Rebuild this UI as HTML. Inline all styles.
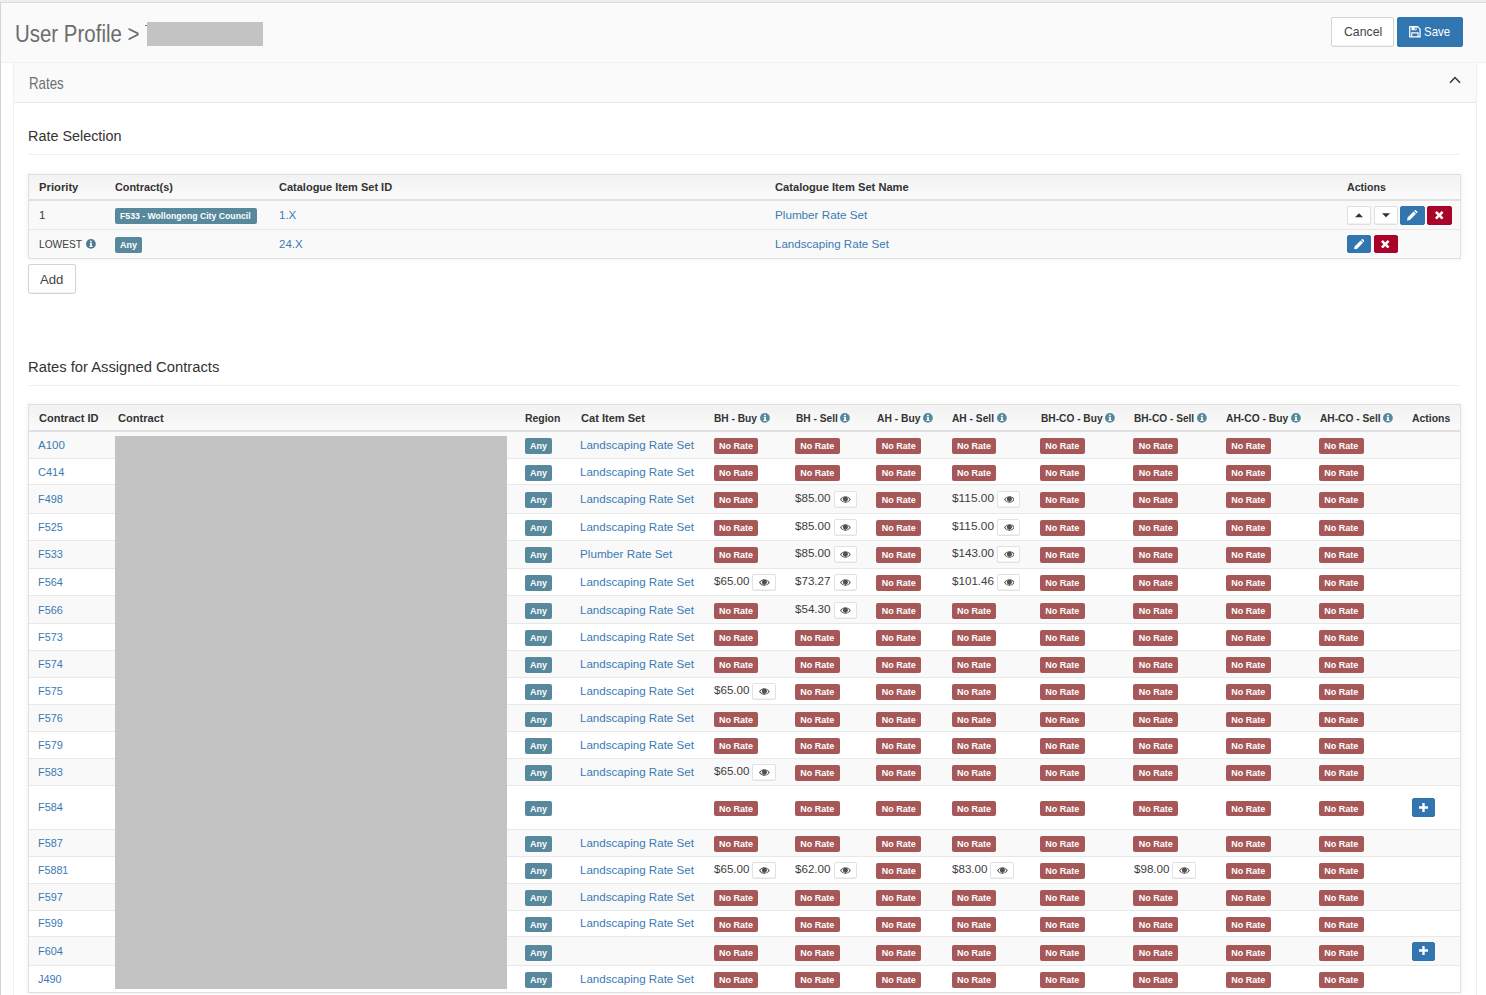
<!DOCTYPE html>
<html lang="en"><head><meta charset="utf-8"><title>User Profile</title>
<style>
*{box-sizing:border-box}
html,body{margin:0;padding:0}
body{width:1486px;height:995px;overflow:hidden;position:relative;background:#fff;font-family:"Liberation Sans",Arial,sans-serif;font-size:11.5px;color:#3d3d3d;line-height:16px}
a{color:#3b7ab4;text-decoration:none}
.sx{display:inline-block;white-space:nowrap;vertical-align:top}
.sx>span{display:inline-block;transform-origin:0 50%;white-space:nowrap}
#topstrip{position:absolute;left:0;top:0;width:1486px;height:3px;background:#eee;border-bottom:1px solid #dcdcdc}
#leftedge{position:absolute;left:0;top:3px;width:1px;height:992px;background:#d9d2d2}
#header{position:absolute;left:1px;top:3px;width:1485px;height:60px;background:#fafafa;border-bottom:1px solid #f0f0f0}
#title{position:absolute;left:14.5px;top:19.6px;font-size:23.3px;line-height:28px;color:#6c6c6c;white-space:nowrap}
#redact1{position:absolute;left:147.1px;top:22px;width:115.9px;height:23.5px;background:#c3c3c3}
#tick{position:absolute;left:145.3px;top:24.6px;width:1.8px;height:1.8px;background:#777}
.btn{position:absolute;display:block;border-radius:2px;font-size:13px;line-height:16px;white-space:nowrap}
.btn .sx{position:absolute}
#cancel{left:1331px;top:17px;width:63px;height:30px;background:#fff;border:1px solid #d4d4d4;color:#444;box-shadow:inset 0 -1px 0 rgba(0,0,0,.05)}
#save{left:1397px;top:17px;width:66px;height:30px;background:#3276b1;border:1px solid #3073ad;color:#fff}
#floppy{position:absolute;left:11px;top:8.4px}
#add{left:28px;top:264.4px;width:47.5px;height:30px;background:#fff;border:1px solid #d4d4d4;color:#444;box-shadow:inset 0 -1px 0 rgba(0,0,0,.05)}
#panel{position:absolute;left:13px;top:63px;width:1464px;height:940px;border:1px solid #f0efee;border-top:none;background:#fff}
#phead{position:absolute;left:0;top:0;width:1462px;height:40px;background:#fafafa;border-bottom:1px solid #e9e9e9}
#ratestxt{position:absolute;left:14.5px;top:10.1px;font-size:16.2px;line-height:20px;color:#707070}
#chev{position:absolute;left:1435px;top:13px}
h3{position:absolute;margin:0;font-weight:400;font-size:15.4px;line-height:20px;color:#333;left:28px;white-space:nowrap}
.hr{position:absolute;left:28px;width:1432px;height:1px;background:#eee}
table{position:absolute;left:28px;width:1433px;border-collapse:separate;border-spacing:0;border:1px solid #e1dfe0;box-shadow:0 0 6px rgba(0,0,0,.07);table-layout:fixed;background:#fff}
th{font-size:11.1px;font-weight:700;text-align:left;padding:0 0 0 10px;color:#333;background:linear-gradient(#f2f2f2,#fafafa);border-bottom:2px solid #e0e0e0;white-space:nowrap;vertical-align:top;overflow:visible}
td{padding:0 0 0 10px;vertical-align:top;white-space:nowrap;overflow:visible;border-top:1px solid #e8e8e9}
tr.first td{border-top:none}
td.v{padding-left:10.6px}
tr.odd td{background:#f9f9f9}
.lab{display:inline-block;height:15.5px;border-radius:2px;color:#fff;font-weight:700;font-size:9px;line-height:16.6px;text-align:center;vertical-align:top;overflow:hidden}
.lab .sx{vertical-align:top}
.li{background:#57889c}
.ld{background:#a65858;width:44.8px}
.any{width:27px}
.info{vertical-align:-1.3px;position:relative;top:-0.3px}
th .info{margin-left:3.1px}
.eye{display:inline-block;width:23.5px;height:16.6px;border:1px solid #e2e2e2;border-radius:2px;background:#fff;box-shadow:inset 0 -1px 0 rgba(0,0,0,.05);vertical-align:top;text-align:center;line-height:14px;margin-left:3.2px}
.eye svg{vertical-align:middle;position:relative;top:-0.6px;left:0.2px;opacity:.85}
.sbtn{display:inline-block;width:24.2px;height:18.4px;border-radius:2px;vertical-align:top;text-align:center;line-height:16px;margin-right:2.7px;border:1px solid}
.sbtn svg{vertical-align:middle;position:relative;top:-0.8px}
.bdef{background:#fff;border-color:#dfdfdf;box-shadow:inset 0 -1px 0 rgba(0,0,0,.05)}
.bpri{background:#3276b1;border-color:#3174ae}
.bdan{background:#a90329;border-color:#a50328}
.btn-plus{position:absolute;display:block;width:23.3px;height:18.8px;border-radius:2px;background:#3276b1;border:1px solid #3174ae;text-align:center;line-height:15px}
.btn-plus svg{vertical-align:middle}
#redact2{position:absolute;left:114.7px;top:435.9px;width:392px;height:552.8px;background:#c3c3c3}
</style></head>
<body>
<div id="topstrip"></div><div id="leftedge"></div>
<div id="header"></div>
<div id="title"><span class="sx" style="width:124.5px;"><span style="transform:scaleX(0.8780)">User Profile &gt;</span></span></div><div id="tick"></div><div id="redact1"></div>
<a class="btn" id="cancel"><span class="sx" style="width:38.2px;left:11.5px;top:6.4px"><span style="transform:scaleX(0.9440)">Cancel</span></span></a><a class="btn" id="save"><svg id="floppy" viewBox="0 0 12 12" width="11.8" height="11.6"><path d="M0.65 0.65 H8.8 L11.35 3.2 V11.35 H0.65 Z" fill="none" stroke="#fff" stroke-width="1.3" stroke-linejoin="round"/><path d="M2.5 0.6 H7.7 V4.3 H2.5 Z M5.7 1.3 H6.8 V3.5 H5.7 Z" fill="#fff" fill-rule="evenodd"/><path d="M2.75 11.3 V7.1 H9.25 V11.3" fill="none" stroke="#fff" stroke-width="1.2"/></svg><span class="sx" style="width:26.2px;left:26.2px;top:6.4px"><span style="transform:scaleX(0.8842)">Save</span></span></a>
<div id="panel"><div id="phead"><div id="ratestxt"><span class="sx" style="width:34.8px;"><span style="transform:scaleX(0.8223)">Rates</span></span></div><svg id="chev" width="12" height="8" viewBox="0 0 12 8"><path d="M1 6.8 L6 1.6 L11 6.8" fill="none" stroke="#333" stroke-width="1.5"/></svg></div></div>
<h3 style="top:125.5px"><span class="sx" style="width:93.6px;"><span style="transform:scaleX(0.9345)">Rate Selection</span></span></h3><div class="hr" style="top:154px"></div>
<table id="t1" style="top:174px"><colgroup><col style="width:76px"><col style="width:164px"><col style="width:496px"><col style="width:572px"><col style="width:123px"></colgroup>
<thead><tr style="height:26px"><th><div style="padding-top:3.6px"><span class="sx" style="width:39.4px;"><span style="transform:scaleX(1.0139)">Priority</span></span></div></th><th><div style="padding-top:3.6px"><span class="sx" style="width:57.9px;"><span style="transform:scaleX(0.9780)">Contract(s)</span></span></div></th><th><div style="padding-top:3.6px"><span class="sx" style="width:113.2px;"><span style="transform:scaleX(0.9920)">Catalogue Item Set ID</span></span></div></th><th><div style="padding-top:3.6px"><span class="sx" style="width:133.8px;"><span style="transform:scaleX(1.0042)">Catalogue Item Set Name</span></span></div></th><th><div style="padding-top:3.6px"><span class="sx" style="width:38.8px;"><span style="transform:scaleX(0.9532)">Actions</span></span></div></th></tr></thead>
<tbody>
<tr class="odd first" style="height:28px"><td><div style="padding-top:5.6px">1</div></td><td><div style="padding-top:7.4px"><span class="lab li" style="width:141.5px"><span class="sx" style="width:130.6px;"><span style="transform:scaleX(0.9650)">F533 - Wollongong City Council</span></span></span></div></td><td><div style="padding-top:5.6px"><a>1.X</a></div></td><td><div style="padding-top:5.6px"><a><span class="sx" style="width:92.2px;"><span style="transform:scaleX(1.0158)">Plumber Rate Set</span></span></a></div></td><td style="padding-left:9.7px"><div style="padding-top:5.3px"><span class="sbtn bdef"><svg viewBox="0 0 8 4" width="8" height="4.3"><path d="M0 4 L4 0 L8 4 Z" fill="#333"/></svg></span><span class="sbtn bdef"><svg viewBox="0 0 8 4" width="8" height="4.3"><path d="M0 0 L4 4 L8 0 Z" fill="#333"/></svg></span><span class="sbtn bpri"><svg viewBox="0 0 12 12" width="10.5" height="10.5"><path d="M0 12 L0.7 8.6 L7.6 1.7 L10.3 4.4 L3.4 11.3 Z M8.3 1 L9.2 0.1 Q9.6 -0.2 10 0.1 L11.9 2 Q12.2 2.4 11.9 2.8 L11 3.7 Z" fill="#fff"/></svg></span><span class="sbtn bdan"><svg viewBox="0 0 10 10" width="8.5" height="8.5"><path d="M2.2 0 L5 2.8 L7.8 0 L10 2.2 L7.2 5 L10 7.8 L7.8 10 L5 7.2 L2.2 10 L0 7.8 L2.8 5 L0 2.2 Z" fill="#fff"/></svg></span></div></td></tr>
<tr class="odd" style="height:29px"><td><div style="padding-top:5.6px"><span class="sx" style="width:43.1px;margin-right:4.2px"><span style="transform:scaleX(0.8875)">LOWEST</span></span><svg class="info" style="color:#4d7a8e" viewBox="0 0 12 12" width="9.8" height="9.8"><circle cx="6" cy="6" r="6" fill="currentColor"/><path d="M4.6 4.6h2.6v4h.9v1.2H4.2V8.6h.9V5.8h-.5z M5 2h2.1v1.7H5z" fill="#fff"/></svg></div></td><td><div style="padding-top:7.2px"><span class="lab li any">Any</span></div></td><td><div style="padding-top:5.6px"><a>24.X</a></div></td><td><div style="padding-top:5.6px"><a><span class="sx" style="width:113.9px;"><span style="transform:scaleX(1.0065)">Landscaping Rate Set</span></span></a></div></td><td style="padding-left:9.7px"><div style="padding-top:4.8px"><span class="sbtn bpri"><svg viewBox="0 0 12 12" width="10.5" height="10.5"><path d="M0 12 L0.7 8.6 L7.6 1.7 L10.3 4.4 L3.4 11.3 Z M8.3 1 L9.2 0.1 Q9.6 -0.2 10 0.1 L11.9 2 Q12.2 2.4 11.9 2.8 L11 3.7 Z" fill="#fff"/></svg></span><span class="sbtn bdan"><svg viewBox="0 0 10 10" width="8.5" height="8.5"><path d="M2.2 0 L5 2.8 L7.8 0 L10 2.2 L7.2 5 L10 7.8 L7.8 10 L5 7.2 L2.2 10 L0 7.8 L2.8 5 L0 2.2 Z" fill="#fff"/></svg></span></div></td></tr>
</tbody></table>
<a class="btn" id="add"><span class="sx" style="width:23.4px;left:11px;top:6.2px"><span style="transform:scaleX(1.0116)">Add</span></span></a>
<h3 style="top:356.7px"><span class="sx" style="width:191.4px;"><span style="transform:scaleX(0.9597)">Rates for Assigned Contracts</span></span></h3><div class="hr" style="top:385px"></div>
<table id="t2" style="top:404px"><colgroup><col style="width:78px"><col style="width:408px"><col style="width:55px"><col style="width:133px"><col style="width:82px"><col style="width:81px"><col style="width:75px"><col style="width:89px"><col style="width:93px"><col style="width:92px"><col style="width:94px"><col style="width:92px"><col style="width:59px"></colgroup>
<thead><tr style="height:27px"><th style="padding-left:9.7px"><div style="padding-top:5.2px"><span class="sx" style="width:59.5px;"><span style="transform:scaleX(0.9946)">Contract ID</span></span></div></th><th style="padding-left:10.7px"><div style="padding-top:5.2px"><span class="sx" style="width:45.6px;"><span style="transform:scaleX(0.9992)">Contract</span></span></div></th><th style="padding-left:10.2px"><div style="padding-top:5.2px"><span class="sx" style="width:35.4px;"><span style="transform:scaleX(0.9411)">Region</span></span></div></th><th style="padding-left:10.8px"><div style="padding-top:5.2px"><span class="sx" style="width:64.0px;"><span style="transform:scaleX(0.9976)">Cat Item Set</span></span></div></th><th style="padding-left:11.1px"><div style="padding-top:5.2px"><span class="sx" style="width:43.0px;"><span style="transform:scaleX(0.9175)">BH - Buy</span></span><svg class="info" style="color:#57889c" viewBox="0 0 12 12" width="9.8" height="9.8"><circle cx="6" cy="6" r="6" fill="currentColor"/><path d="M4.6 4.6h2.6v4h.9v1.2H4.2V8.6h.9V5.8h-.5z M5 2h2.1v1.7H5z" fill="#fff"/></svg></div></th><th style="padding-left:10.5px"><div style="padding-top:5.2px"><span class="sx" style="width:41.8px;"><span style="transform:scaleX(0.9158)">BH - Sell</span></span><svg class="info" style="color:#57889c" viewBox="0 0 12 12" width="9.8" height="9.8"><circle cx="6" cy="6" r="6" fill="currentColor"/><path d="M4.6 4.6h2.6v4h.9v1.2H4.2V8.6h.9V5.8h-.5z M5 2h2.1v1.7H5z" fill="#fff"/></svg></div></th><th style="padding-left:10.7px"><div style="padding-top:5.2px"><span class="sx" style="width:43.4px;"><span style="transform:scaleX(0.9260)">AH - Buy</span></span><svg class="info" style="color:#57889c" viewBox="0 0 12 12" width="9.8" height="9.8"><circle cx="6" cy="6" r="6" fill="currentColor"/><path d="M4.6 4.6h2.6v4h.9v1.2H4.2V8.6h.9V5.8h-.5z M5 2h2.1v1.7H5z" fill="#fff"/></svg></div></th><th style="padding-left:11.1px"><div style="padding-top:5.2px"><span class="sx" style="width:42.0px;"><span style="transform:scaleX(0.9202)">AH - Sell</span></span><svg class="info" style="color:#57889c" viewBox="0 0 12 12" width="9.8" height="9.8"><circle cx="6" cy="6" r="6" fill="currentColor"/><path d="M4.6 4.6h2.6v4h.9v1.2H4.2V8.6h.9V5.8h-.5z M5 2h2.1v1.7H5z" fill="#fff"/></svg></div></th><th style="padding-left:10.5px"><div style="padding-top:5.2px"><span class="sx" style="width:61.6px;"><span style="transform:scaleX(0.9165)">BH-CO - Buy</span></span><svg class="info" style="color:#57889c" viewBox="0 0 12 12" width="9.8" height="9.8"><circle cx="6" cy="6" r="6" fill="currentColor"/><path d="M4.6 4.6h2.6v4h.9v1.2H4.2V8.6h.9V5.8h-.5z M5 2h2.1v1.7H5z" fill="#fff"/></svg></div></th><th style="padding-left:10.8px"><div style="padding-top:5.2px"><span class="sx" style="width:60.2px;"><span style="transform:scaleX(0.9123)">BH-CO - Sell</span></span><svg class="info" style="color:#57889c" viewBox="0 0 12 12" width="9.8" height="9.8"><circle cx="6" cy="6" r="6" fill="currentColor"/><path d="M4.6 4.6h2.6v4h.9v1.2H4.2V8.6h.9V5.8h-.5z M5 2h2.1v1.7H5z" fill="#fff"/></svg></div></th><th style="padding-left:10.8px"><div style="padding-top:5.2px"><span class="sx" style="width:62.2px;"><span style="transform:scaleX(0.9254)">AH-CO - Buy</span></span><svg class="info" style="color:#57889c" viewBox="0 0 12 12" width="9.8" height="9.8"><circle cx="6" cy="6" r="6" fill="currentColor"/><path d="M4.6 4.6h2.6v4h.9v1.2H4.2V8.6h.9V5.8h-.5z M5 2h2.1v1.7H5z" fill="#fff"/></svg></div></th><th style="padding-left:10.7px"><div style="padding-top:5.2px"><span class="sx" style="width:60.6px;"><span style="transform:scaleX(0.9183)">AH-CO - Sell</span></span><svg class="info" style="color:#57889c" viewBox="0 0 12 12" width="9.8" height="9.8"><circle cx="6" cy="6" r="6" fill="currentColor"/><path d="M4.6 4.6h2.6v4h.9v1.2H4.2V8.6h.9V5.8h-.5z M5 2h2.1v1.7H5z" fill="#fff"/></svg></div></th><th style="padding-left:11.2px"><div style="padding-top:5.2px"><span class="sx" style="width:38.3px;"><span style="transform:scaleX(0.9409)">Actions</span></span></div></th></tr></thead>
<tbody>
<tr class="odd first" style="height:26px"><td style="padding-left:9.3px"><div style="padding-top:4.5px"><a><span class="sx" style="width:26.9px;"><span style="transform:scaleX(1.0015)">A100</span></span></a></div></td><td></td><td><div style="padding-top:6.1px"><span class="lab li any">Any</span></div></td><td><div style="padding-top:4.5px"><a><span class="sx" style="width:113.9px;"><span style="transform:scaleX(1.0065)">Landscaping Rate Set</span></span></a></div></td><td style="padding-left:10.5px"><div style="padding-top:6.1px"><span class="lab ld">No Rate</span></div></td><td style="padding-left:9.9px"><div style="padding-top:6.1px"><span class="lab ld">No Rate</span></div></td><td style="padding-left:10.3px"><div style="padding-top:6.1px"><span class="lab ld">No Rate</span></div></td><td style="padding-left:10.6px"><div style="padding-top:6.1px"><span class="lab ld">No Rate</span></div></td><td style="padding-left:9.9px"><div style="padding-top:6.1px"><span class="lab ld">No Rate</span></div></td><td style="padding-left:10.4px"><div style="padding-top:6.1px"><span class="lab ld">No Rate</span></div></td><td style="padding-left:10.9px"><div style="padding-top:6.1px"><span class="lab ld">No Rate</span></div></td><td style="padding-left:9.9px"><div style="padding-top:6.1px"><span class="lab ld">No Rate</span></div></td><td></td></tr>
<tr class="even" style="height:26px"><td style="padding-left:9.3px"><div style="padding-top:4.5px"><a><span class="sx" style="width:26.4px;"><span style="transform:scaleX(0.9602)">C414</span></span></a></div></td><td></td><td><div style="padding-top:6.1px"><span class="lab li any">Any</span></div></td><td><div style="padding-top:4.5px"><a><span class="sx" style="width:113.9px;"><span style="transform:scaleX(1.0065)">Landscaping Rate Set</span></span></a></div></td><td style="padding-left:10.5px"><div style="padding-top:6.1px"><span class="lab ld">No Rate</span></div></td><td style="padding-left:9.9px"><div style="padding-top:6.1px"><span class="lab ld">No Rate</span></div></td><td style="padding-left:10.3px"><div style="padding-top:6.1px"><span class="lab ld">No Rate</span></div></td><td style="padding-left:10.6px"><div style="padding-top:6.1px"><span class="lab ld">No Rate</span></div></td><td style="padding-left:9.9px"><div style="padding-top:6.1px"><span class="lab ld">No Rate</span></div></td><td style="padding-left:10.4px"><div style="padding-top:6.1px"><span class="lab ld">No Rate</span></div></td><td style="padding-left:10.9px"><div style="padding-top:6.1px"><span class="lab ld">No Rate</span></div></td><td style="padding-left:9.9px"><div style="padding-top:6.1px"><span class="lab ld">No Rate</span></div></td><td></td></tr>
<tr class="odd" style="height:29px"><td style="padding-left:9.3px"><div style="padding-top:5.5px"><a><span class="sx" style="width:24.8px;"><span style="transform:scaleX(0.9461)">F498</span></span></a></div></td><td></td><td><div style="padding-top:7.1px"><span class="lab li any">Any</span></div></td><td><div style="padding-top:5.5px"><a><span class="sx" style="width:113.9px;"><span style="transform:scaleX(1.0065)">Landscaping Rate Set</span></span></a></div></td><td style="padding-left:10.5px"><div style="padding-top:7.1px"><span class="lab ld">No Rate</span></div></td><td style="padding-left:10.1px"><div style="padding-top:6.2px"><span class="sx" style="width:35.5px;margin-top:-1.1px"><span style="transform:scaleX(1.0092)">$85.00</span></span><span class="eye"><svg viewBox="0 0 20 12" width="10.8" height="6.8"><path d="M0 6 C3 1.2 7 0 10 0 C13 0 17 1.2 20 6 C17 10.8 13 12 10 12 C7 12 3 10.8 0 6 Z" fill="#333"/><path d="M2.3 6 C4.5 3 6 2.2 7 1.9 A5 5 0 0 0 10 10.6 A5 5 0 0 0 13 1.9 C14 2.2 15.5 3 17.7 6 C15.5 9.3 12.5 10.7 10 10.7 C7.5 10.7 4.5 9.3 2.3 6 Z" fill="#fff"/><circle cx="10" cy="5.6" r="3.6" fill="#333"/></svg></span></div></td><td style="padding-left:10.3px"><div style="padding-top:7.1px"><span class="lab ld">No Rate</span></div></td><td style="padding-left:10.8px"><div style="padding-top:6.2px"><span class="sx" style="width:42.0px;margin-top:-1.1px"><span style="transform:scaleX(1.0315)">$115.00</span></span><span class="eye"><svg viewBox="0 0 20 12" width="10.8" height="6.8"><path d="M0 6 C3 1.2 7 0 10 0 C13 0 17 1.2 20 6 C17 10.8 13 12 10 12 C7 12 3 10.8 0 6 Z" fill="#333"/><path d="M2.3 6 C4.5 3 6 2.2 7 1.9 A5 5 0 0 0 10 10.6 A5 5 0 0 0 13 1.9 C14 2.2 15.5 3 17.7 6 C15.5 9.3 12.5 10.7 10 10.7 C7.5 10.7 4.5 9.3 2.3 6 Z" fill="#fff"/><circle cx="10" cy="5.6" r="3.6" fill="#333"/></svg></span></div></td><td style="padding-left:9.9px"><div style="padding-top:7.1px"><span class="lab ld">No Rate</span></div></td><td style="padding-left:10.4px"><div style="padding-top:7.1px"><span class="lab ld">No Rate</span></div></td><td style="padding-left:10.9px"><div style="padding-top:7.1px"><span class="lab ld">No Rate</span></div></td><td style="padding-left:9.9px"><div style="padding-top:7.1px"><span class="lab ld">No Rate</span></div></td><td></td></tr>
<tr class="even" style="height:27px"><td style="padding-left:9.3px"><div style="padding-top:4.5px"><a><span class="sx" style="width:24.8px;"><span style="transform:scaleX(0.9461)">F525</span></span></a></div></td><td></td><td><div style="padding-top:6.1px"><span class="lab li any">Any</span></div></td><td><div style="padding-top:4.5px"><a><span class="sx" style="width:113.9px;"><span style="transform:scaleX(1.0065)">Landscaping Rate Set</span></span></a></div></td><td style="padding-left:10.5px"><div style="padding-top:6.1px"><span class="lab ld">No Rate</span></div></td><td style="padding-left:10.1px"><div style="padding-top:5.2px"><span class="sx" style="width:35.5px;margin-top:-1.1px"><span style="transform:scaleX(1.0092)">$85.00</span></span><span class="eye"><svg viewBox="0 0 20 12" width="10.8" height="6.8"><path d="M0 6 C3 1.2 7 0 10 0 C13 0 17 1.2 20 6 C17 10.8 13 12 10 12 C7 12 3 10.8 0 6 Z" fill="#333"/><path d="M2.3 6 C4.5 3 6 2.2 7 1.9 A5 5 0 0 0 10 10.6 A5 5 0 0 0 13 1.9 C14 2.2 15.5 3 17.7 6 C15.5 9.3 12.5 10.7 10 10.7 C7.5 10.7 4.5 9.3 2.3 6 Z" fill="#fff"/><circle cx="10" cy="5.6" r="3.6" fill="#333"/></svg></span></div></td><td style="padding-left:10.3px"><div style="padding-top:6.1px"><span class="lab ld">No Rate</span></div></td><td style="padding-left:10.8px"><div style="padding-top:5.2px"><span class="sx" style="width:42.0px;margin-top:-1.1px"><span style="transform:scaleX(1.0315)">$115.00</span></span><span class="eye"><svg viewBox="0 0 20 12" width="10.8" height="6.8"><path d="M0 6 C3 1.2 7 0 10 0 C13 0 17 1.2 20 6 C17 10.8 13 12 10 12 C7 12 3 10.8 0 6 Z" fill="#333"/><path d="M2.3 6 C4.5 3 6 2.2 7 1.9 A5 5 0 0 0 10 10.6 A5 5 0 0 0 13 1.9 C14 2.2 15.5 3 17.7 6 C15.5 9.3 12.5 10.7 10 10.7 C7.5 10.7 4.5 9.3 2.3 6 Z" fill="#fff"/><circle cx="10" cy="5.6" r="3.6" fill="#333"/></svg></span></div></td><td style="padding-left:9.9px"><div style="padding-top:6.1px"><span class="lab ld">No Rate</span></div></td><td style="padding-left:10.4px"><div style="padding-top:6.1px"><span class="lab ld">No Rate</span></div></td><td style="padding-left:10.9px"><div style="padding-top:6.1px"><span class="lab ld">No Rate</span></div></td><td style="padding-left:9.9px"><div style="padding-top:6.1px"><span class="lab ld">No Rate</span></div></td><td></td></tr>
<tr class="odd" style="height:28px"><td style="padding-left:9.3px"><div style="padding-top:4.5px"><a><span class="sx" style="width:24.8px;"><span style="transform:scaleX(0.9461)">F533</span></span></a></div></td><td></td><td><div style="padding-top:6.1px"><span class="lab li any">Any</span></div></td><td><div style="padding-top:4.5px"><a><span class="sx" style="width:92.2px;"><span style="transform:scaleX(1.0158)">Plumber Rate Set</span></span></a></div></td><td style="padding-left:10.5px"><div style="padding-top:6.1px"><span class="lab ld">No Rate</span></div></td><td style="padding-left:10.1px"><div style="padding-top:5.2px"><span class="sx" style="width:35.5px;margin-top:-1.1px"><span style="transform:scaleX(1.0092)">$85.00</span></span><span class="eye"><svg viewBox="0 0 20 12" width="10.8" height="6.8"><path d="M0 6 C3 1.2 7 0 10 0 C13 0 17 1.2 20 6 C17 10.8 13 12 10 12 C7 12 3 10.8 0 6 Z" fill="#333"/><path d="M2.3 6 C4.5 3 6 2.2 7 1.9 A5 5 0 0 0 10 10.6 A5 5 0 0 0 13 1.9 C14 2.2 15.5 3 17.7 6 C15.5 9.3 12.5 10.7 10 10.7 C7.5 10.7 4.5 9.3 2.3 6 Z" fill="#fff"/><circle cx="10" cy="5.6" r="3.6" fill="#333"/></svg></span></div></td><td style="padding-left:10.3px"><div style="padding-top:6.1px"><span class="lab ld">No Rate</span></div></td><td style="padding-left:10.8px"><div style="padding-top:5.2px"><span class="sx" style="width:42.0px;margin-top:-1.1px"><span style="transform:scaleX(1.0103)">$143.00</span></span><span class="eye"><svg viewBox="0 0 20 12" width="10.8" height="6.8"><path d="M0 6 C3 1.2 7 0 10 0 C13 0 17 1.2 20 6 C17 10.8 13 12 10 12 C7 12 3 10.8 0 6 Z" fill="#333"/><path d="M2.3 6 C4.5 3 6 2.2 7 1.9 A5 5 0 0 0 10 10.6 A5 5 0 0 0 13 1.9 C14 2.2 15.5 3 17.7 6 C15.5 9.3 12.5 10.7 10 10.7 C7.5 10.7 4.5 9.3 2.3 6 Z" fill="#fff"/><circle cx="10" cy="5.6" r="3.6" fill="#333"/></svg></span></div></td><td style="padding-left:9.9px"><div style="padding-top:6.1px"><span class="lab ld">No Rate</span></div></td><td style="padding-left:10.4px"><div style="padding-top:6.1px"><span class="lab ld">No Rate</span></div></td><td style="padding-left:10.9px"><div style="padding-top:6.1px"><span class="lab ld">No Rate</span></div></td><td style="padding-left:9.9px"><div style="padding-top:6.1px"><span class="lab ld">No Rate</span></div></td><td></td></tr>
<tr class="even" style="height:27px"><td style="padding-left:9.3px"><div style="padding-top:4.5px"><a><span class="sx" style="width:24.8px;"><span style="transform:scaleX(0.9461)">F564</span></span></a></div></td><td></td><td><div style="padding-top:6.1px"><span class="lab li any">Any</span></div></td><td><div style="padding-top:4.5px"><a><span class="sx" style="width:113.9px;"><span style="transform:scaleX(1.0065)">Landscaping Rate Set</span></span></a></div></td><td style="padding-left:10.7px"><div style="padding-top:5.2px"><span class="sx" style="width:35.5px;margin-top:-1.1px"><span style="transform:scaleX(1.0092)">$65.00</span></span><span class="eye"><svg viewBox="0 0 20 12" width="10.8" height="6.8"><path d="M0 6 C3 1.2 7 0 10 0 C13 0 17 1.2 20 6 C17 10.8 13 12 10 12 C7 12 3 10.8 0 6 Z" fill="#333"/><path d="M2.3 6 C4.5 3 6 2.2 7 1.9 A5 5 0 0 0 10 10.6 A5 5 0 0 0 13 1.9 C14 2.2 15.5 3 17.7 6 C15.5 9.3 12.5 10.7 10 10.7 C7.5 10.7 4.5 9.3 2.3 6 Z" fill="#fff"/><circle cx="10" cy="5.6" r="3.6" fill="#333"/></svg></span></div></td><td style="padding-left:10.1px"><div style="padding-top:5.2px"><span class="sx" style="width:35.5px;margin-top:-1.1px"><span style="transform:scaleX(1.0092)">$73.27</span></span><span class="eye"><svg viewBox="0 0 20 12" width="10.8" height="6.8"><path d="M0 6 C3 1.2 7 0 10 0 C13 0 17 1.2 20 6 C17 10.8 13 12 10 12 C7 12 3 10.8 0 6 Z" fill="#333"/><path d="M2.3 6 C4.5 3 6 2.2 7 1.9 A5 5 0 0 0 10 10.6 A5 5 0 0 0 13 1.9 C14 2.2 15.5 3 17.7 6 C15.5 9.3 12.5 10.7 10 10.7 C7.5 10.7 4.5 9.3 2.3 6 Z" fill="#fff"/><circle cx="10" cy="5.6" r="3.6" fill="#333"/></svg></span></div></td><td style="padding-left:10.3px"><div style="padding-top:6.1px"><span class="lab ld">No Rate</span></div></td><td style="padding-left:10.8px"><div style="padding-top:5.2px"><span class="sx" style="width:42.0px;margin-top:-1.1px"><span style="transform:scaleX(1.0103)">$101.46</span></span><span class="eye"><svg viewBox="0 0 20 12" width="10.8" height="6.8"><path d="M0 6 C3 1.2 7 0 10 0 C13 0 17 1.2 20 6 C17 10.8 13 12 10 12 C7 12 3 10.8 0 6 Z" fill="#333"/><path d="M2.3 6 C4.5 3 6 2.2 7 1.9 A5 5 0 0 0 10 10.6 A5 5 0 0 0 13 1.9 C14 2.2 15.5 3 17.7 6 C15.5 9.3 12.5 10.7 10 10.7 C7.5 10.7 4.5 9.3 2.3 6 Z" fill="#fff"/><circle cx="10" cy="5.6" r="3.6" fill="#333"/></svg></span></div></td><td style="padding-left:9.9px"><div style="padding-top:6.1px"><span class="lab ld">No Rate</span></div></td><td style="padding-left:10.4px"><div style="padding-top:6.1px"><span class="lab ld">No Rate</span></div></td><td style="padding-left:10.9px"><div style="padding-top:6.1px"><span class="lab ld">No Rate</span></div></td><td style="padding-left:9.9px"><div style="padding-top:6.1px"><span class="lab ld">No Rate</span></div></td><td></td></tr>
<tr class="odd" style="height:28px"><td style="padding-left:9.3px"><div style="padding-top:5.5px"><a><span class="sx" style="width:24.8px;"><span style="transform:scaleX(0.9461)">F566</span></span></a></div></td><td></td><td><div style="padding-top:7.1px"><span class="lab li any">Any</span></div></td><td><div style="padding-top:5.5px"><a><span class="sx" style="width:113.9px;"><span style="transform:scaleX(1.0065)">Landscaping Rate Set</span></span></a></div></td><td style="padding-left:10.5px"><div style="padding-top:7.1px"><span class="lab ld">No Rate</span></div></td><td style="padding-left:10.1px"><div style="padding-top:6.2px"><span class="sx" style="width:35.5px;margin-top:-1.1px"><span style="transform:scaleX(1.0092)">$54.30</span></span><span class="eye"><svg viewBox="0 0 20 12" width="10.8" height="6.8"><path d="M0 6 C3 1.2 7 0 10 0 C13 0 17 1.2 20 6 C17 10.8 13 12 10 12 C7 12 3 10.8 0 6 Z" fill="#333"/><path d="M2.3 6 C4.5 3 6 2.2 7 1.9 A5 5 0 0 0 10 10.6 A5 5 0 0 0 13 1.9 C14 2.2 15.5 3 17.7 6 C15.5 9.3 12.5 10.7 10 10.7 C7.5 10.7 4.5 9.3 2.3 6 Z" fill="#fff"/><circle cx="10" cy="5.6" r="3.6" fill="#333"/></svg></span></div></td><td style="padding-left:10.3px"><div style="padding-top:7.1px"><span class="lab ld">No Rate</span></div></td><td style="padding-left:10.6px"><div style="padding-top:7.1px"><span class="lab ld">No Rate</span></div></td><td style="padding-left:9.9px"><div style="padding-top:7.1px"><span class="lab ld">No Rate</span></div></td><td style="padding-left:10.4px"><div style="padding-top:7.1px"><span class="lab ld">No Rate</span></div></td><td style="padding-left:10.9px"><div style="padding-top:7.1px"><span class="lab ld">No Rate</span></div></td><td style="padding-left:9.9px"><div style="padding-top:7.1px"><span class="lab ld">No Rate</span></div></td><td></td></tr>
<tr class="even" style="height:27px"><td style="padding-left:9.3px"><div style="padding-top:4.5px"><a><span class="sx" style="width:24.8px;"><span style="transform:scaleX(0.9461)">F573</span></span></a></div></td><td></td><td><div style="padding-top:6.1px"><span class="lab li any">Any</span></div></td><td><div style="padding-top:4.5px"><a><span class="sx" style="width:113.9px;"><span style="transform:scaleX(1.0065)">Landscaping Rate Set</span></span></a></div></td><td style="padding-left:10.5px"><div style="padding-top:6.1px"><span class="lab ld">No Rate</span></div></td><td style="padding-left:9.9px"><div style="padding-top:6.1px"><span class="lab ld">No Rate</span></div></td><td style="padding-left:10.3px"><div style="padding-top:6.1px"><span class="lab ld">No Rate</span></div></td><td style="padding-left:10.6px"><div style="padding-top:6.1px"><span class="lab ld">No Rate</span></div></td><td style="padding-left:9.9px"><div style="padding-top:6.1px"><span class="lab ld">No Rate</span></div></td><td style="padding-left:10.4px"><div style="padding-top:6.1px"><span class="lab ld">No Rate</span></div></td><td style="padding-left:10.9px"><div style="padding-top:6.1px"><span class="lab ld">No Rate</span></div></td><td style="padding-left:9.9px"><div style="padding-top:6.1px"><span class="lab ld">No Rate</span></div></td><td></td></tr>
<tr class="odd" style="height:27px"><td style="padding-left:9.3px"><div style="padding-top:4.5px"><a><span class="sx" style="width:24.8px;"><span style="transform:scaleX(0.9461)">F574</span></span></a></div></td><td></td><td><div style="padding-top:6.1px"><span class="lab li any">Any</span></div></td><td><div style="padding-top:4.5px"><a><span class="sx" style="width:113.9px;"><span style="transform:scaleX(1.0065)">Landscaping Rate Set</span></span></a></div></td><td style="padding-left:10.5px"><div style="padding-top:6.1px"><span class="lab ld">No Rate</span></div></td><td style="padding-left:9.9px"><div style="padding-top:6.1px"><span class="lab ld">No Rate</span></div></td><td style="padding-left:10.3px"><div style="padding-top:6.1px"><span class="lab ld">No Rate</span></div></td><td style="padding-left:10.6px"><div style="padding-top:6.1px"><span class="lab ld">No Rate</span></div></td><td style="padding-left:9.9px"><div style="padding-top:6.1px"><span class="lab ld">No Rate</span></div></td><td style="padding-left:10.4px"><div style="padding-top:6.1px"><span class="lab ld">No Rate</span></div></td><td style="padding-left:10.9px"><div style="padding-top:6.1px"><span class="lab ld">No Rate</span></div></td><td style="padding-left:9.9px"><div style="padding-top:6.1px"><span class="lab ld">No Rate</span></div></td><td></td></tr>
<tr class="even" style="height:27px"><td style="padding-left:9.3px"><div style="padding-top:4.5px"><a><span class="sx" style="width:24.8px;"><span style="transform:scaleX(0.9461)">F575</span></span></a></div></td><td></td><td><div style="padding-top:6.1px"><span class="lab li any">Any</span></div></td><td><div style="padding-top:4.5px"><a><span class="sx" style="width:113.9px;"><span style="transform:scaleX(1.0065)">Landscaping Rate Set</span></span></a></div></td><td style="padding-left:10.7px"><div style="padding-top:5.2px"><span class="sx" style="width:35.5px;margin-top:-1.1px"><span style="transform:scaleX(1.0092)">$65.00</span></span><span class="eye"><svg viewBox="0 0 20 12" width="10.8" height="6.8"><path d="M0 6 C3 1.2 7 0 10 0 C13 0 17 1.2 20 6 C17 10.8 13 12 10 12 C7 12 3 10.8 0 6 Z" fill="#333"/><path d="M2.3 6 C4.5 3 6 2.2 7 1.9 A5 5 0 0 0 10 10.6 A5 5 0 0 0 13 1.9 C14 2.2 15.5 3 17.7 6 C15.5 9.3 12.5 10.7 10 10.7 C7.5 10.7 4.5 9.3 2.3 6 Z" fill="#fff"/><circle cx="10" cy="5.6" r="3.6" fill="#333"/></svg></span></div></td><td style="padding-left:9.9px"><div style="padding-top:6.1px"><span class="lab ld">No Rate</span></div></td><td style="padding-left:10.3px"><div style="padding-top:6.1px"><span class="lab ld">No Rate</span></div></td><td style="padding-left:10.6px"><div style="padding-top:6.1px"><span class="lab ld">No Rate</span></div></td><td style="padding-left:9.9px"><div style="padding-top:6.1px"><span class="lab ld">No Rate</span></div></td><td style="padding-left:10.4px"><div style="padding-top:6.1px"><span class="lab ld">No Rate</span></div></td><td style="padding-left:10.9px"><div style="padding-top:6.1px"><span class="lab ld">No Rate</span></div></td><td style="padding-left:9.9px"><div style="padding-top:6.1px"><span class="lab ld">No Rate</span></div></td><td></td></tr>
<tr class="odd" style="height:27px"><td style="padding-left:9.3px"><div style="padding-top:5.0px"><a><span class="sx" style="width:24.8px;"><span style="transform:scaleX(0.9461)">F576</span></span></a></div></td><td></td><td><div style="padding-top:6.6px"><span class="lab li any">Any</span></div></td><td><div style="padding-top:5.0px"><a><span class="sx" style="width:113.9px;"><span style="transform:scaleX(1.0065)">Landscaping Rate Set</span></span></a></div></td><td style="padding-left:10.5px"><div style="padding-top:6.6px"><span class="lab ld">No Rate</span></div></td><td style="padding-left:9.9px"><div style="padding-top:6.6px"><span class="lab ld">No Rate</span></div></td><td style="padding-left:10.3px"><div style="padding-top:6.6px"><span class="lab ld">No Rate</span></div></td><td style="padding-left:10.6px"><div style="padding-top:6.6px"><span class="lab ld">No Rate</span></div></td><td style="padding-left:9.9px"><div style="padding-top:6.6px"><span class="lab ld">No Rate</span></div></td><td style="padding-left:10.4px"><div style="padding-top:6.6px"><span class="lab ld">No Rate</span></div></td><td style="padding-left:10.9px"><div style="padding-top:6.6px"><span class="lab ld">No Rate</span></div></td><td style="padding-left:9.9px"><div style="padding-top:6.6px"><span class="lab ld">No Rate</span></div></td><td></td></tr>
<tr class="even" style="height:27px"><td style="padding-left:9.3px"><div style="padding-top:4.5px"><a><span class="sx" style="width:24.8px;"><span style="transform:scaleX(0.9461)">F579</span></span></a></div></td><td></td><td><div style="padding-top:6.1px"><span class="lab li any">Any</span></div></td><td><div style="padding-top:4.5px"><a><span class="sx" style="width:113.9px;"><span style="transform:scaleX(1.0065)">Landscaping Rate Set</span></span></a></div></td><td style="padding-left:10.5px"><div style="padding-top:6.1px"><span class="lab ld">No Rate</span></div></td><td style="padding-left:9.9px"><div style="padding-top:6.1px"><span class="lab ld">No Rate</span></div></td><td style="padding-left:10.3px"><div style="padding-top:6.1px"><span class="lab ld">No Rate</span></div></td><td style="padding-left:10.6px"><div style="padding-top:6.1px"><span class="lab ld">No Rate</span></div></td><td style="padding-left:9.9px"><div style="padding-top:6.1px"><span class="lab ld">No Rate</span></div></td><td style="padding-left:10.4px"><div style="padding-top:6.1px"><span class="lab ld">No Rate</span></div></td><td style="padding-left:10.9px"><div style="padding-top:6.1px"><span class="lab ld">No Rate</span></div></td><td style="padding-left:9.9px"><div style="padding-top:6.1px"><span class="lab ld">No Rate</span></div></td><td></td></tr>
<tr class="odd" style="height:27px"><td style="padding-left:9.3px"><div style="padding-top:4.5px"><a><span class="sx" style="width:24.8px;"><span style="transform:scaleX(0.9461)">F583</span></span></a></div></td><td></td><td><div style="padding-top:6.1px"><span class="lab li any">Any</span></div></td><td><div style="padding-top:4.5px"><a><span class="sx" style="width:113.9px;"><span style="transform:scaleX(1.0065)">Landscaping Rate Set</span></span></a></div></td><td style="padding-left:10.7px"><div style="padding-top:5.2px"><span class="sx" style="width:35.5px;margin-top:-1.1px"><span style="transform:scaleX(1.0092)">$65.00</span></span><span class="eye"><svg viewBox="0 0 20 12" width="10.8" height="6.8"><path d="M0 6 C3 1.2 7 0 10 0 C13 0 17 1.2 20 6 C17 10.8 13 12 10 12 C7 12 3 10.8 0 6 Z" fill="#333"/><path d="M2.3 6 C4.5 3 6 2.2 7 1.9 A5 5 0 0 0 10 10.6 A5 5 0 0 0 13 1.9 C14 2.2 15.5 3 17.7 6 C15.5 9.3 12.5 10.7 10 10.7 C7.5 10.7 4.5 9.3 2.3 6 Z" fill="#fff"/><circle cx="10" cy="5.6" r="3.6" fill="#333"/></svg></span></div></td><td style="padding-left:9.9px"><div style="padding-top:6.1px"><span class="lab ld">No Rate</span></div></td><td style="padding-left:10.3px"><div style="padding-top:6.1px"><span class="lab ld">No Rate</span></div></td><td style="padding-left:10.6px"><div style="padding-top:6.1px"><span class="lab ld">No Rate</span></div></td><td style="padding-left:9.9px"><div style="padding-top:6.1px"><span class="lab ld">No Rate</span></div></td><td style="padding-left:10.4px"><div style="padding-top:6.1px"><span class="lab ld">No Rate</span></div></td><td style="padding-left:10.9px"><div style="padding-top:6.1px"><span class="lab ld">No Rate</span></div></td><td style="padding-left:9.9px"><div style="padding-top:6.1px"><span class="lab ld">No Rate</span></div></td><td></td></tr>
<tr class="even" style="height:44px"><td style="padding-left:9.3px"><div style="padding-top:13.4px"><a><span class="sx" style="width:24.8px;"><span style="transform:scaleX(0.9461)">F584</span></span></a></div></td><td></td><td><div style="padding-top:14.6px"><span class="lab li any">Any</span></div></td><td></td><td style="padding-left:10.5px"><div style="padding-top:14.6px"><span class="lab ld">No Rate</span></div></td><td style="padding-left:9.9px"><div style="padding-top:14.6px"><span class="lab ld">No Rate</span></div></td><td style="padding-left:10.3px"><div style="padding-top:14.6px"><span class="lab ld">No Rate</span></div></td><td style="padding-left:10.6px"><div style="padding-top:14.6px"><span class="lab ld">No Rate</span></div></td><td style="padding-left:9.9px"><div style="padding-top:14.6px"><span class="lab ld">No Rate</span></div></td><td style="padding-left:10.4px"><div style="padding-top:14.6px"><span class="lab ld">No Rate</span></div></td><td style="padding-left:10.9px"><div style="padding-top:14.6px"><span class="lab ld">No Rate</span></div></td><td style="padding-left:9.9px"><div style="padding-top:14.6px"><span class="lab ld">No Rate</span></div></td><td style="position:relative"><span class="btn-plus" style="left:11px;top:12.4px"><svg viewBox="0 0 10 10" width="9" height="9"><path d="M3.7 0h2.6v3.7H10v2.6H6.3V10H3.7V6.3H0V3.7h3.7z" fill="#fff"/></svg></span></td></tr>
<tr class="odd" style="height:27px"><td style="padding-left:9.3px"><div style="padding-top:4.5px"><a><span class="sx" style="width:24.8px;"><span style="transform:scaleX(0.9461)">F587</span></span></a></div></td><td></td><td><div style="padding-top:6.1px"><span class="lab li any">Any</span></div></td><td><div style="padding-top:4.5px"><a><span class="sx" style="width:113.9px;"><span style="transform:scaleX(1.0065)">Landscaping Rate Set</span></span></a></div></td><td style="padding-left:10.5px"><div style="padding-top:6.1px"><span class="lab ld">No Rate</span></div></td><td style="padding-left:9.9px"><div style="padding-top:6.1px"><span class="lab ld">No Rate</span></div></td><td style="padding-left:10.3px"><div style="padding-top:6.1px"><span class="lab ld">No Rate</span></div></td><td style="padding-left:10.6px"><div style="padding-top:6.1px"><span class="lab ld">No Rate</span></div></td><td style="padding-left:9.9px"><div style="padding-top:6.1px"><span class="lab ld">No Rate</span></div></td><td style="padding-left:10.4px"><div style="padding-top:6.1px"><span class="lab ld">No Rate</span></div></td><td style="padding-left:10.9px"><div style="padding-top:6.1px"><span class="lab ld">No Rate</span></div></td><td style="padding-left:9.9px"><div style="padding-top:6.1px"><span class="lab ld">No Rate</span></div></td><td></td></tr>
<tr class="even" style="height:27px"><td style="padding-left:9.3px"><div style="padding-top:4.5px"><a><span class="sx" style="width:30.3px;"><span style="transform:scaleX(0.9292)">F5881</span></span></a></div></td><td></td><td><div style="padding-top:6.1px"><span class="lab li any">Any</span></div></td><td><div style="padding-top:4.5px"><a><span class="sx" style="width:113.9px;"><span style="transform:scaleX(1.0065)">Landscaping Rate Set</span></span></a></div></td><td style="padding-left:10.7px"><div style="padding-top:5.2px"><span class="sx" style="width:35.5px;margin-top:-1.1px"><span style="transform:scaleX(1.0092)">$65.00</span></span><span class="eye"><svg viewBox="0 0 20 12" width="10.8" height="6.8"><path d="M0 6 C3 1.2 7 0 10 0 C13 0 17 1.2 20 6 C17 10.8 13 12 10 12 C7 12 3 10.8 0 6 Z" fill="#333"/><path d="M2.3 6 C4.5 3 6 2.2 7 1.9 A5 5 0 0 0 10 10.6 A5 5 0 0 0 13 1.9 C14 2.2 15.5 3 17.7 6 C15.5 9.3 12.5 10.7 10 10.7 C7.5 10.7 4.5 9.3 2.3 6 Z" fill="#fff"/><circle cx="10" cy="5.6" r="3.6" fill="#333"/></svg></span></div></td><td style="padding-left:10.1px"><div style="padding-top:5.2px"><span class="sx" style="width:35.5px;margin-top:-1.1px"><span style="transform:scaleX(1.0092)">$62.00</span></span><span class="eye"><svg viewBox="0 0 20 12" width="10.8" height="6.8"><path d="M0 6 C3 1.2 7 0 10 0 C13 0 17 1.2 20 6 C17 10.8 13 12 10 12 C7 12 3 10.8 0 6 Z" fill="#333"/><path d="M2.3 6 C4.5 3 6 2.2 7 1.9 A5 5 0 0 0 10 10.6 A5 5 0 0 0 13 1.9 C14 2.2 15.5 3 17.7 6 C15.5 9.3 12.5 10.7 10 10.7 C7.5 10.7 4.5 9.3 2.3 6 Z" fill="#fff"/><circle cx="10" cy="5.6" r="3.6" fill="#333"/></svg></span></div></td><td style="padding-left:10.3px"><div style="padding-top:6.1px"><span class="lab ld">No Rate</span></div></td><td style="padding-left:10.8px"><div style="padding-top:5.2px"><span class="sx" style="width:35.5px;margin-top:-1.1px"><span style="transform:scaleX(1.0092)">$83.00</span></span><span class="eye"><svg viewBox="0 0 20 12" width="10.8" height="6.8"><path d="M0 6 C3 1.2 7 0 10 0 C13 0 17 1.2 20 6 C17 10.8 13 12 10 12 C7 12 3 10.8 0 6 Z" fill="#333"/><path d="M2.3 6 C4.5 3 6 2.2 7 1.9 A5 5 0 0 0 10 10.6 A5 5 0 0 0 13 1.9 C14 2.2 15.5 3 17.7 6 C15.5 9.3 12.5 10.7 10 10.7 C7.5 10.7 4.5 9.3 2.3 6 Z" fill="#fff"/><circle cx="10" cy="5.6" r="3.6" fill="#333"/></svg></span></div></td><td style="padding-left:9.9px"><div style="padding-top:6.1px"><span class="lab ld">No Rate</span></div></td><td style="padding-left:10.6px"><div style="padding-top:5.2px"><span class="sx" style="width:35.5px;margin-top:-1.1px"><span style="transform:scaleX(1.0092)">$98.00</span></span><span class="eye"><svg viewBox="0 0 20 12" width="10.8" height="6.8"><path d="M0 6 C3 1.2 7 0 10 0 C13 0 17 1.2 20 6 C17 10.8 13 12 10 12 C7 12 3 10.8 0 6 Z" fill="#333"/><path d="M2.3 6 C4.5 3 6 2.2 7 1.9 A5 5 0 0 0 10 10.6 A5 5 0 0 0 13 1.9 C14 2.2 15.5 3 17.7 6 C15.5 9.3 12.5 10.7 10 10.7 C7.5 10.7 4.5 9.3 2.3 6 Z" fill="#fff"/><circle cx="10" cy="5.6" r="3.6" fill="#333"/></svg></span></div></td><td style="padding-left:10.9px"><div style="padding-top:6.1px"><span class="lab ld">No Rate</span></div></td><td style="padding-left:9.9px"><div style="padding-top:6.1px"><span class="lab ld">No Rate</span></div></td><td></td></tr>
<tr class="odd" style="height:27px"><td style="padding-left:9.3px"><div style="padding-top:4.5px"><a><span class="sx" style="width:24.8px;"><span style="transform:scaleX(0.9461)">F597</span></span></a></div></td><td></td><td><div style="padding-top:6.1px"><span class="lab li any">Any</span></div></td><td><div style="padding-top:4.5px"><a><span class="sx" style="width:113.9px;"><span style="transform:scaleX(1.0065)">Landscaping Rate Set</span></span></a></div></td><td style="padding-left:10.5px"><div style="padding-top:6.1px"><span class="lab ld">No Rate</span></div></td><td style="padding-left:9.9px"><div style="padding-top:6.1px"><span class="lab ld">No Rate</span></div></td><td style="padding-left:10.3px"><div style="padding-top:6.1px"><span class="lab ld">No Rate</span></div></td><td style="padding-left:10.6px"><div style="padding-top:6.1px"><span class="lab ld">No Rate</span></div></td><td style="padding-left:9.9px"><div style="padding-top:6.1px"><span class="lab ld">No Rate</span></div></td><td style="padding-left:10.4px"><div style="padding-top:6.1px"><span class="lab ld">No Rate</span></div></td><td style="padding-left:10.9px"><div style="padding-top:6.1px"><span class="lab ld">No Rate</span></div></td><td style="padding-left:9.9px"><div style="padding-top:6.1px"><span class="lab ld">No Rate</span></div></td><td></td></tr>
<tr class="even" style="height:26px"><td style="padding-left:9.3px"><div style="padding-top:4.0px"><a><span class="sx" style="width:24.8px;"><span style="transform:scaleX(0.9461)">F599</span></span></a></div></td><td></td><td><div style="padding-top:5.6px"><span class="lab li any">Any</span></div></td><td><div style="padding-top:4.0px"><a><span class="sx" style="width:113.9px;"><span style="transform:scaleX(1.0065)">Landscaping Rate Set</span></span></a></div></td><td style="padding-left:10.5px"><div style="padding-top:5.6px"><span class="lab ld">No Rate</span></div></td><td style="padding-left:9.9px"><div style="padding-top:5.6px"><span class="lab ld">No Rate</span></div></td><td style="padding-left:10.3px"><div style="padding-top:5.6px"><span class="lab ld">No Rate</span></div></td><td style="padding-left:10.6px"><div style="padding-top:5.6px"><span class="lab ld">No Rate</span></div></td><td style="padding-left:9.9px"><div style="padding-top:5.6px"><span class="lab ld">No Rate</span></div></td><td style="padding-left:10.4px"><div style="padding-top:5.6px"><span class="lab ld">No Rate</span></div></td><td style="padding-left:10.9px"><div style="padding-top:5.6px"><span class="lab ld">No Rate</span></div></td><td style="padding-left:9.9px"><div style="padding-top:5.6px"><span class="lab ld">No Rate</span></div></td><td></td></tr>
<tr class="odd" style="height:29px"><td style="padding-left:9.3px"><div style="padding-top:5.7px"><a><span class="sx" style="width:24.8px;"><span style="transform:scaleX(0.9461)">F604</span></span></a></div></td><td></td><td><div style="padding-top:8.1px"><span class="lab li any">Any</span></div></td><td></td><td style="padding-left:10.5px"><div style="padding-top:8.1px"><span class="lab ld">No Rate</span></div></td><td style="padding-left:9.9px"><div style="padding-top:8.1px"><span class="lab ld">No Rate</span></div></td><td style="padding-left:10.3px"><div style="padding-top:8.1px"><span class="lab ld">No Rate</span></div></td><td style="padding-left:10.6px"><div style="padding-top:8.1px"><span class="lab ld">No Rate</span></div></td><td style="padding-left:9.9px"><div style="padding-top:8.1px"><span class="lab ld">No Rate</span></div></td><td style="padding-left:10.4px"><div style="padding-top:8.1px"><span class="lab ld">No Rate</span></div></td><td style="padding-left:10.9px"><div style="padding-top:8.1px"><span class="lab ld">No Rate</span></div></td><td style="padding-left:9.9px"><div style="padding-top:8.1px"><span class="lab ld">No Rate</span></div></td><td style="position:relative"><span class="btn-plus" style="left:11px;top:5.0px"><svg viewBox="0 0 10 10" width="9" height="9"><path d="M3.7 0h2.6v3.7H10v2.6H6.3V10H3.7V6.3H0V3.7h3.7z" fill="#fff"/></svg></span></td></tr>
<tr class="even" style="height:27px"><td style="padding-left:8.7px"><div style="padding-top:4.5px"><a><span class="sx" style="width:23.6px;"><span style="transform:scaleX(0.9463)">J490</span></span></a></div></td><td></td><td><div style="padding-top:6.1px"><span class="lab li any">Any</span></div></td><td><div style="padding-top:4.5px"><a><span class="sx" style="width:113.9px;"><span style="transform:scaleX(1.0065)">Landscaping Rate Set</span></span></a></div></td><td style="padding-left:10.5px"><div style="padding-top:6.1px"><span class="lab ld">No Rate</span></div></td><td style="padding-left:9.9px"><div style="padding-top:6.1px"><span class="lab ld">No Rate</span></div></td><td style="padding-left:10.3px"><div style="padding-top:6.1px"><span class="lab ld">No Rate</span></div></td><td style="padding-left:10.6px"><div style="padding-top:6.1px"><span class="lab ld">No Rate</span></div></td><td style="padding-left:9.9px"><div style="padding-top:6.1px"><span class="lab ld">No Rate</span></div></td><td style="padding-left:10.4px"><div style="padding-top:6.1px"><span class="lab ld">No Rate</span></div></td><td style="padding-left:10.9px"><div style="padding-top:6.1px"><span class="lab ld">No Rate</span></div></td><td style="padding-left:9.9px"><div style="padding-top:6.1px"><span class="lab ld">No Rate</span></div></td><td></td></tr>
</tbody></table>
<div id="redact2"></div>
</body></html>
